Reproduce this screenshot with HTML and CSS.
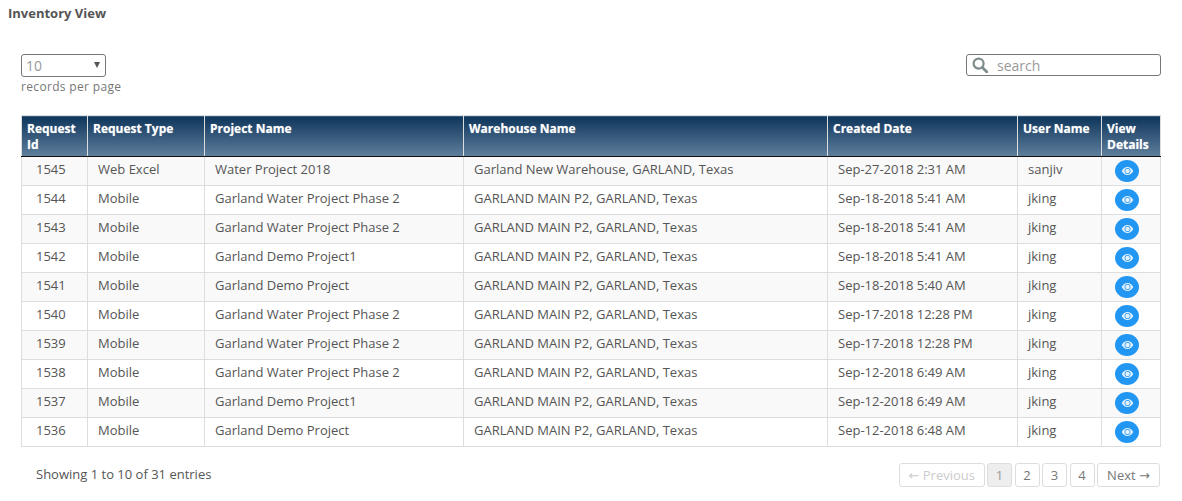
FILE: index.html
```html
<!DOCTYPE html>
<html lang="en">
<head>
  <meta charset="UTF-8" />
  <title>Inventory View</title>
  <link rel="stylesheet" href="styles.css">
</head>
<body>
  <svg class="icon-sprite">
    <symbol id="icon-eye" viewBox="0 1 16 10">
      <path fill-rule="evenodd" fill="#e3f1fc" d="M8 1C4.6 1 2 3.400.8 6 2 8.600 4.600 11 8 11s6-2.400 7.200-5C14 3.400 11.400 1 8 1zm0 1.300A3.700 3.700 0 1 1 8 9.700 3.700 3.700 0 0 1 8 2.300z"/>
      <circle cx="8" cy="6" r="2.800" fill="#e3f1fc"/>
    </symbol>
  </svg>

  <h4 class="page-title">Inventory View</h4>

  <div class="container">
    <div class="toolbar">
      <div class="length-box">
        <div class="select-box"><span>10</span><span class="select-arrow"></span></div>
        <div class="length-label">records per page</div>
      </div>
      <div class="search-box">
        <svg class="search-icon" viewBox="0 0 16 16" width="16" height="16">
          <circle cx="6.6" cy="6.6" r="5" fill="none" stroke="#7f8c8d" stroke-width="2.2"/>
          <path d="M10.4 10.4L15 15" stroke="#7f8c8d" stroke-width="2.8" stroke-linecap="round"/>
        </svg>
        <span class="search-text">search</span>
      </div>
    </div>

    <table class="data-table">
      <colgroup>
        <col class="col-id"><col class="col-type"><col class="col-project"><col class="col-warehouse"><col class="col-date"><col class="col-user"><col class="col-view">
      </colgroup>
      <thead>
        <tr>
          <th>Request Id</th>
          <th>Request Type</th>
          <th>Project Name</th>
          <th>Warehouse Name</th>
          <th>Created Date</th>
          <th>User Name</th>
          <th>View Details</th>
        </tr>
      </thead>
      <tbody>
        <tr><td class="id-cell">1545</td><td>Web Excel</td><td>Water Project 2018</td><td>Garland New Warehouse, GARLAND, Texas</td><td>Sep-27-2018 2:31 AM</td><td>sanjiv</td><td class="view-cell"><a class="view-btn"><svg class="eye"><use href="#icon-eye"/></svg></a></td></tr>
        <tr><td class="id-cell">1544</td><td>Mobile</td><td>Garland Water Project Phase 2</td><td>GARLAND MAIN P2, GARLAND, Texas</td><td>Sep-18-2018 5:41 AM</td><td>jking</td><td class="view-cell"><a class="view-btn"><svg class="eye"><use href="#icon-eye"/></svg></a></td></tr>
        <tr><td class="id-cell">1543</td><td>Mobile</td><td>Garland Water Project Phase 2</td><td>GARLAND MAIN P2, GARLAND, Texas</td><td>Sep-18-2018 5:41 AM</td><td>jking</td><td class="view-cell"><a class="view-btn"><svg class="eye"><use href="#icon-eye"/></svg></a></td></tr>
        <tr><td class="id-cell">1542</td><td>Mobile</td><td>Garland Demo Project1</td><td>GARLAND MAIN P2, GARLAND, Texas</td><td>Sep-18-2018 5:41 AM</td><td>jking</td><td class="view-cell"><a class="view-btn"><svg class="eye"><use href="#icon-eye"/></svg></a></td></tr>
        <tr><td class="id-cell">1541</td><td>Mobile</td><td>Garland Demo Project</td><td>GARLAND MAIN P2, GARLAND, Texas</td><td>Sep-18-2018 5:40 AM</td><td>jking</td><td class="view-cell"><a class="view-btn"><svg class="eye"><use href="#icon-eye"/></svg></a></td></tr>
        <tr><td class="id-cell">1540</td><td>Mobile</td><td>Garland Water Project Phase 2</td><td>GARLAND MAIN P2, GARLAND, Texas</td><td>Sep-17-2018 12:28 PM</td><td>jking</td><td class="view-cell"><a class="view-btn"><svg class="eye"><use href="#icon-eye"/></svg></a></td></tr>
        <tr><td class="id-cell">1539</td><td>Mobile</td><td>Garland Water Project Phase 2</td><td>GARLAND MAIN P2, GARLAND, Texas</td><td>Sep-17-2018 12:28 PM</td><td>jking</td><td class="view-cell"><a class="view-btn"><svg class="eye"><use href="#icon-eye"/></svg></a></td></tr>
        <tr><td class="id-cell">1538</td><td>Mobile</td><td>Garland Water Project Phase 2</td><td>GARLAND MAIN P2, GARLAND, Texas</td><td>Sep-12-2018 6:49 AM</td><td>jking</td><td class="view-cell"><a class="view-btn"><svg class="eye"><use href="#icon-eye"/></svg></a></td></tr>
        <tr><td class="id-cell">1537</td><td>Mobile</td><td>Garland Demo Project1</td><td>GARLAND MAIN P2, GARLAND, Texas</td><td>Sep-12-2018 6:49 AM</td><td>jking</td><td class="view-cell"><a class="view-btn"><svg class="eye"><use href="#icon-eye"/></svg></a></td></tr>
        <tr><td class="id-cell">1536</td><td>Mobile</td><td>Garland Demo Project</td><td>GARLAND MAIN P2, GARLAND, Texas</td><td>Sep-12-2018 6:48 AM</td><td>jking</td><td class="view-cell"><a class="view-btn"><svg class="eye"><use href="#icon-eye"/></svg></a></td></tr>
      </tbody>
    </table>

    <div class="table-footer">
      <div class="entries-info">Showing 1 to 10 of 31 entries</div>
      <div class="pagination">
        <a class="page-btn prev disabled"><span class="arrow">←</span> Previous</a>
        <a class="page-btn active">1</a>
        <a class="page-btn">2</a>
        <a class="page-btn">3</a>
        <a class="page-btn">4</a>
        <a class="page-btn next">Next <span class="arrow">→</span></a>
      </div>
    </div>
  </div>
</body>
</html>
```

FILE: styles.css
```css
body {
  margin: 0;
  font-family: "Open Sans", Arial, sans-serif;
  font-size: 13px;
  line-height: 18px;
  color: #555;
  background-color: #fff;
}

.icon-sprite {
  display: none;
}

.page-title {
  margin: 0;
  padding: 5px 8px 0;
  font-size: 13px;
  line-height: 17px;
  font-weight: 700;
  color: #555;
}

.container {
  padding: 32px 21px 0;
}

/* top controls */
.toolbar {
  display: flex;
  justify-content: space-between;
  align-items: flex-start;
  height: 61px;
}

.select-box {
  display: flex;
  justify-content: space-between;
  align-items: center;
  box-sizing: border-box;
  width: 85px;
  height: 23px;
  padding: 0 5px 0 4px;
  border: 1px solid #777;
  border-radius: 3px;
  font-size: 14px;
  color: #999;
}

.select-arrow {
  width: 0;
  height: 0;
  border-left: 3px solid transparent;
  border-right: 3px solid transparent;
  border-top: 6px solid #555;
  margin-bottom: 2px;
}

.length-label {
  margin-top: 1px;
  font-size: 12px;
  line-height: 18px;
  letter-spacing: 0.33px;
  color: #777;
}

.search-box {
  display: flex;
  align-items: center;
  box-sizing: border-box;
  width: 195px;
  height: 22px;
  padding: 0 5px;
  border: 1px solid #777;
  border-radius: 3px;
}

.search-icon {
  flex: none;
}

.search-text {
  margin-left: 9px;
  padding-top: 2px;
  font-size: 14px;
  color: #999;
}

/* table */
.data-table {
  width: 1139px;
  table-layout: fixed;
  border-collapse: collapse;
}

.col-id { width: 66px; }
.col-type { width: 117px; }
.col-project { width: 259px; }
.col-warehouse { width: 364px; }
.col-date { width: 190px; }
.col-user { width: 84px; }
.col-view { width: 59px; }

.data-table th {
  height: 41px;
  box-sizing: border-box;
  padding: 5px 5px 0;
  vertical-align: top;
  text-align: left;
  font-size: 12px;
  line-height: 16px;
  font-weight: 700;
  color: #fff;
  text-shadow: 0 0 1px rgba(255, 255, 255, 0.5);
  background: linear-gradient(to bottom, #0e355b, #5f7f9d);
  border: 1px solid #ddd;
  border-bottom: 1px solid #111;
}

.data-table td {
  height: 29px;
  box-sizing: border-box;
  padding: 0 10px 5px;
  border: 1px solid #ddd;
  vertical-align: middle;
  white-space: nowrap;
  color: #555;
}

.data-table tbody tr:nth-child(odd) td {
  background-color: #f9f9f9;
}

.data-table td.id-cell {
  padding-left: 14px;
}

.data-table td.view-cell {
  padding: 0;
}

.view-btn {
  display: flex;
  align-items: center;
  justify-content: center;
  width: 24px;
  height: 22px;
  margin-left: 13px;
  border-radius: 50%;
  background-color: #2196f3;
}

.eye {
  width: 13px;
  height: 8px;
}

/* footer */
.table-footer {
  display: flex;
  justify-content: space-between;
  align-items: center;
  padding: 16px 1px 0 15px;
}

.entries-info {
  margin-bottom: 2px;
}

.pagination {
  display: flex;
  gap: 2.5px;
}

.page-btn {
  box-sizing: border-box;
  width: 25px;
  height: 24px;
  border: 1px solid #ddd;
  border-radius: 3px;
  line-height: 23px;
  text-align: center;
  color: #777;
}

.page-btn.prev {
  width: 85.5px;
  margin-right: 0;
}

.page-btn.next {
  width: 63px;
}

.page-btn.disabled {
  color: #ccc;
}

.page-btn.active {
  background-color: #eee;
  color: #999;
}

.arrow {
  font-family: "DejaVu Sans", Arial, sans-serif;
}
```
